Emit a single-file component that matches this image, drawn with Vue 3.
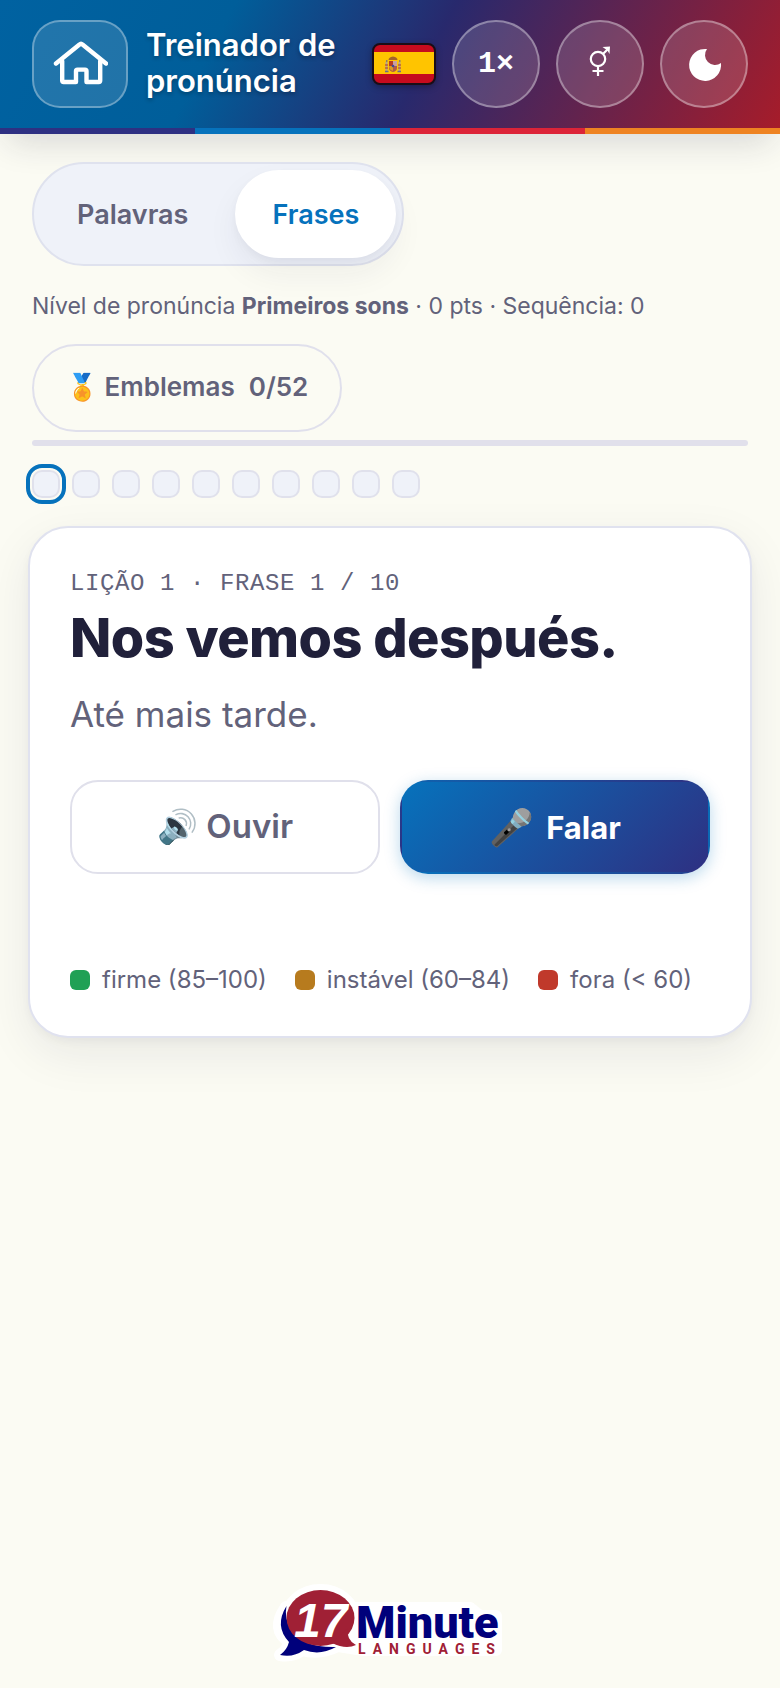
<script setup>
import { ref } from 'vue'

const mode = ref('frases')
const modes = [
  { id: 'palavras', label: 'Palavras' },
  { id: 'frases', label: 'Frases' },
]
const current = ref(0)
const legend = [
  { kind: 'good', label: 'firme (85–100)' },
  { kind: 'mid', label: 'instável (60–84)' },
  { kind: 'bad', label: 'fora (< 60)' },
]
</script>

<template>
  <div class="page">
    <header class="top">
      <div class="bar">
        <a class="home" href="#" aria-label="Início">
          <svg width="56" height="48" viewBox="52 40 56 48" fill="none" stroke="#fff" stroke-width="4.4" stroke-linecap="round" stroke-linejoin="round">
            <path d="M56 63.500L79.500 44.500Q81 43 82.500 44.500L106 63.500" />
            <path d="M62.200 61V80.500Q62.200 82 63.700 82H76V71Q76 69.600 77.500 69.600H85Q86.500 69.600 86.500 71V82H98.700Q100.200 82 100.200 80.500V61" />
          </svg>
        </a>
        <h1>Treinador de pronúncia</h1>
        <svg class="flag" width="64" height="42" viewBox="0 0 64 42" role="img" aria-label="Espanhol">
          <rect x="1" y="1" width="62" height="40" rx="7" fill="#c60b1e" />
          <rect x="1" y="9" width="62" height="22" fill="#ffc400" />
          <g>
            <path d="M17 18h8v7q0 3-4 4-4-1-4-4z" fill="#ad5a4a" />
            <path d="M17 18h4v5h-4z" fill="#b83a20" />
            <path d="M21 18h4v5h-4z" fill="#c9a0a0" />
            <path d="M17 23h4v5q-4-1-4-5z" fill="#d99b20" />
            <circle cx="21" cy="23" r="1.300" fill="#3a4a9a" />
            <path d="M16.500 17q0-3 4.500-3.500 4.500.5 4.500 3.500z" fill="#a3642a" />
            <path d="M14.500 19v9M27.500 19v9" stroke="#b5a58a" stroke-width="2" />
            <path d="M13 22h3M26 22h3M13 25h3M26 25h3" stroke="#b3362a" stroke-width="1" />
            <path d="M13 28.500h3.500M25.500 28.500H29M14 18h1.500M27 18h1.500" stroke="#6a6a8a" stroke-width="1.500" />
          </g>
          <rect x="1" y="1" width="62" height="40" rx="7" fill="none" stroke="#1a0d16" stroke-width="2" />
        </svg>
        <button class="round" type="button" aria-label="Velocidade 1×">1×</button>
        <button class="round" type="button" aria-label="Gênero da voz">
          <svg width="40" height="40" viewBox="-20 -20 40 40" fill="none" stroke="#fff" stroke-width="2.200">
            <circle cx="-2" cy="-5" r="7.200" />
            <path d="M3.200-10.200L8-15M-2 2.200V12M-7.500 7H3.500" />
            <path d="M2.500-17L10-17.500 9.500-10 7.500-13.500z" fill="#fff" stroke="none" />
          </svg>
        </button>
        <button class="round" type="button" aria-label="Modo escuro">
          <svg width="40" height="40" viewBox="-20 -20 40 40">
            <path d="M3-15A10 10 0 0 0 17-1A16 16 0 1 1 3-15z" fill="#fff" />
          </svg>
        </button>
      </div>
      <div class="stripe"><i></i><i></i><i></i><i></i></div>
    </header>

    <main>
      <div class="modes">
        <button
          v-for="m in modes"
          :key="m.id"
          type="button"
          :class="{ active: mode === m.id }"
          :aria-pressed="mode === m.id"
          @click="mode = m.id"
        >{{ m.label }}</button>
      </div>

      <p class="status">Nível de pronúncia <strong>Primeiros sons</strong> · 0 pts · Sequência: 0</p>

      <button class="badges" type="button"><span>🏅 Emblemas</span><span>0/52</span></button>

      <div class="progress" role="progressbar" aria-label="Progresso" aria-valuenow="0" aria-valuemin="0" aria-valuemax="10"></div>

      <div class="dots">
        <button
          v-for="n in 10"
          :key="n"
          type="button"
          :class="{ current: current === n - 1 }"
          :aria-label="'Frase ' + n"
          @click="current = n - 1"
        ></button>
      </div>

      <section class="card">
        <p class="label">Lição 1 · Frase 1 / 10</p>
        <h2>Nos vemos después.</h2>
        <p class="translation">Até mais tarde.</p>
        <div class="actions">
          <button class="listen" type="button">🔊 Ouvir</button>
          <button class="speak" type="button"><span class="mic">🎤</span><span>Falar</span></button>
        </div>
        <ul class="legend">
          <li v-for="l in legend" :key="l.kind"><i :class="l.kind"></i>{{ l.label }}</li>
        </ul>
      </section>
    </main>

    <footer>
      <a href="#" aria-label="17 Minute Languages">
        <svg width="240" height="84" viewBox="270 1580 240 84">
          <g fill="#fff" stroke="#fff" stroke-width="12" stroke-linejoin="round">
            <ellipse cx="320.500" cy="1619" rx="34" ry="29" />
            <path d="M286 1607Q270 1630 290 1642Q287 1650 280 1655Q293 1657 302 1650Q320 1655 338 1646L364 1650H496V1616H480L470 1608H357z" />
          </g>
          <path d="M286.500 1606Q274 1626 289 1642Q287 1650 280 1655Q293 1658 304 1650Q320 1656 336 1647Q304 1648 291 1630Q284 1618 286.500 1606z" fill="#00007b" />
          <ellipse cx="320.500" cy="1618" rx="34" ry="28" fill="#a02035" />
          <path d="M348 1628Q346 1640 356 1645Q346 1650 332 1643z" fill="#a02035" />
          <text x="294" y="1637" class="logo-num">17</text>
          <text x="356" y="1638" class="logo-name">Minute</text>
          <text x="358" y="1654" class="logo-sub">LANGUAGES</text>
        </svg>
      </a>
    </footer>
  </div>
</template>

<style>
body {
  background: #fbfbf3;
}
</style>

<style scoped>
* {
  box-sizing: border-box;
}
.page {
  min-height: 100vh;
  display: flex;
  flex-direction: column;
  font-family: Inter, "Liberation Sans", sans-serif;
  color: #62627a;
}
h1, h2, p, ul {
  margin: 0;
  padding: 0;
}
button {
  font: inherit;
  color: inherit;
  margin: 0;
  padding: 0;
  border: 0;
  background: none;
  cursor: pointer;
}
.top {
  box-shadow: 0 16px 32px -8px rgba(30, 30, 60, .16);
}
.bar {
  display: flex;
  align-items: center;
  gap: 16px;
  padding: 20px 32px;
  background: linear-gradient(118deg, #0062a1 0%, #005e9a 28%, #28296d 54%, #a61c2a 100%);
}
.home {
  flex: none;
  width: 96px;
  height: 88px;
  display: flex;
  align-items: center;
  justify-content: center;
  border: 2px solid rgba(255, 255, 255, .32);
  border-radius: 28px;
  background: rgba(255, 255, 255, .13);
}
h1 {
  flex: 1;
  min-width: 0;
  padding: 0 0 2px 2px;
  color: #fff;
  font-size: 31px;
  line-height: 36px;
  font-weight: 600;
  text-shadow: 0 2px 4px rgba(0, 0, 0, .3);
}
.flag {
  flex: none;
  filter: drop-shadow(0 2px 3px rgba(0, 0, 0, .3));
}
.round {
  flex: none;
  width: 88px;
  height: 88px;
  display: flex;
  align-items: center;
  justify-content: center;
  border: 2px solid rgba(255, 255, 255, .35);
  border-radius: 50%;
  background: rgba(255, 255, 255, .14);
  color: #fff;
  font-family: "Liberation Mono", monospace;
  font-size: 30px;
  font-weight: 700;
}
.stripe {
  display: grid;
  grid-template-columns: repeat(4, 1fr);
  height: 6px;
}
.stripe i:nth-child(1) { background: #2e3082; }
.stripe i:nth-child(2) { background: #0672bc; }
.stripe i:nth-child(3) { background: #dc2438; }
.stripe i:nth-child(4) { background: #ee8322; }

main {
  flex: 1;
  display: flex;
  flex-direction: column;
  align-items: flex-start;
  padding: 28px 32px;
}
.modes {
  display: flex;
  gap: 10px;
  padding: 6px;
  border: 2px solid #dfe2ee;
  border-radius: 52px;
  background: #eff2f9;
}
.modes button {
  height: 88px;
  padding: 0 35px;
  border: 2px solid transparent;
  border-radius: 44px;
  font-size: 27px;
  font-weight: 600;
}
.modes .active {
  border-color: #fff;
  background: #fff;
  color: #0672bc;
  box-shadow: 0 4px 8px rgba(30, 30, 60, .04), 0 16px 32px rgba(30, 30, 60, .06);
}
.status {
  margin: 20px 0 18px;
  font-size: 23px;
  line-height: 40px;
}
.badges {
  display: flex;
  align-items: center;
  gap: 14px;
  height: 88px;
  padding: 0 32px 4px;
  border: 2px solid #e0e0ec;
  border-radius: 44px;
  font-size: 26px;
  font-weight: 600;
}
.progress {
  width: 100%;
  height: 6px;
  margin: 8px 0 24px;
  border-radius: 3px;
  background: #e1e0eb;
}
.dots {
  display: flex;
  gap: 12px;
}
.dots button {
  width: 28px;
  height: 28px;
  border: 2px solid #e0e1ec;
  border-radius: 10px;
  background: #eff2f9;
}
.dots .current {
  outline: 4px solid #0672bc;
  outline-offset: 2px;
}
.card {
  align-self: stretch;
  margin: 28px -4px 0;
  padding: 38px 40px;
  border: 2px solid #e0e2ef;
  border-radius: 40px;
  background: #fff;
  box-shadow: 0 4px 8px rgba(30, 30, 60, .04), 0 16px 48px rgba(30, 30, 60, .08);
}
.label {
  margin-bottom: 4px;
  font-family: "Liberation Mono", monospace;
  font-size: 24px;
  line-height: 36px;
  letter-spacing: .025em;
  text-transform: uppercase;
}
h2 {
  margin-bottom: 22px;
  color: #20203a;
  font-size: 54px;
  line-height: 64px;
  font-weight: 800;
  letter-spacing: -.01em;
}
.translation {
  margin-bottom: 44px;
  font-size: 35px;
  line-height: 44px;
}
.actions {
  display: grid;
  grid-template-columns: 1fr 1fr;
  gap: 20px;
  margin-bottom: 88px;
}
.actions button {
  height: 94px;
  padding-bottom: 2px;
  border: 2px solid #e0e0eb;
  border-radius: 28px;
  font-size: 33px;
  font-weight: 600;
}
.actions .speak {
  display: flex;
  align-items: center;
  justify-content: center;
  gap: 12px;
  padding-bottom: 0;
  border-color: transparent;
  background: linear-gradient(135deg, #0672bc, #2e3082);
  color: #fff;
  font-size: 31px;
  font-weight: 700;
  box-shadow: 0 4px 16px rgba(6, 114, 188, .28);
}
.mic {
  font-size: 36px;
}
.legend {
  display: flex;
  flex-wrap: wrap;
  gap: 28px;
  list-style: none;
  font-size: 24px;
  line-height: 36px;
}
.legend li {
  display: flex;
  align-items: center;
  gap: 12px;
}
.legend i {
  width: 20px;
  height: 20px;
  border-radius: 6px;
}
.good { background: #20a055; }
.mid { background: #b77b1e; }
.bad { background: #c0392b; }

footer {
  display: flex;
  justify-content: center;
  padding-bottom: 24px;
}
footer svg {
  display: block;
}
.logo-num {
  font: italic 700 48px "Liberation Sans", sans-serif;
  fill: #fff;
}
.logo-name {
  font: 900 45px Roboto, sans-serif;
  fill: #00007b;
}
.logo-sub {
  font: 700 14px Roboto, sans-serif;
  letter-spacing: 7px;
  fill: #a02035;
}
</style>
